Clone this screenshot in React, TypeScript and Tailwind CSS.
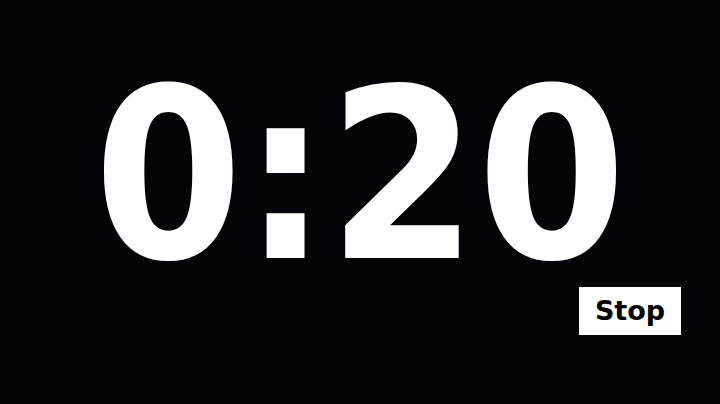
import React from "react";

const App: React.FC = () => {
  return (
    <div
      className="w-[720px] h-[404px] bg-[#050307] flex flex-col text-white"
      style={{ fontFamily: '"DejaVu Sans Condensed", "DejaVu Sans", sans-serif' }}
    >
      <div className="pt-[76px] text-center text-[238px] leading-[200px] font-bold">0:20</div>
      <div className="flex justify-end pr-[39px] pt-[11px]">
        <button
          className="w-[102px] h-[48px] bg-white text-black text-[27px] leading-none font-bold flex items-center justify-center pb-[2px]"
          style={{ fontFamily: '"DejaVu Sans", sans-serif' }}
        >
          Stop
        </button>
      </div>
    </div>
  );
};

export default App;
